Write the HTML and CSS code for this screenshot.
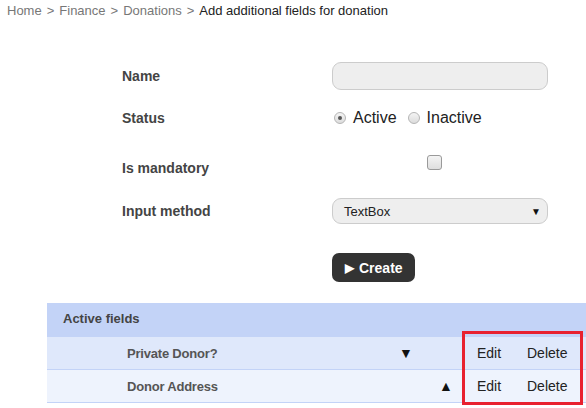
FILE: index.html
```html
<!DOCTYPE html>
<html>
<head>
<meta charset="utf-8">
<link rel="stylesheet" href="styles.css">
</head>
<body>
<div class="page">
  <nav class="breadcrumb">
    <span class="crumb">Home</span> <span class="sep">&gt;</span>
    <span class="crumb">Finance</span> <span class="sep">&gt;</span>
    <span class="crumb">Donations</span> <span class="sep">&gt;</span>
    <span class="current">Add additional fields for donation</span>
  </nav>

  <form class="form">
    <div class="row row-name">
      <label class="label">Name</label>
      <div class="control"><input class="text-input" type="text"></div>
    </div>
    <div class="row row-status">
      <label class="label">Status</label>
      <div class="control radios">
        <span class="radio checked"></span><span class="radio-text">Active</span>
        <span class="radio"></span><span class="radio-text">Inactive</span>
      </div>
    </div>
    <div class="row row-mandatory">
      <label class="label">Is mandatory</label>
      <div class="control check-cell"><span class="checkbox"></span></div>
    </div>
    <div class="row row-method">
      <label class="label">Input method</label>
      <div class="control">
        <div class="select"><span>TextBox</span><span class="caret">&#9660;</span></div>
      </div>
    </div>
    <div class="row row-create">
      <div class="label"></div>
      <div class="control"><button type="button" class="create-btn"><span class="play">&#9654;</span> Create</button></div>
    </div>
  </form>

  <div class="fields">
    <div class="fields-head">Active fields</div>
    <div class="field-row odd">
      <span class="field-name">Private Donor?</span>
      <span class="arrow arrow-down">&#9660;</span>
      <span class="action edit">Edit</span>
      <span class="action">Delete</span>
    </div>
    <div class="field-row even">
      <span class="field-name">Donor Address</span>
      <span class="arrow arrow-up">&#9650;</span>
      <span class="action edit">Edit</span>
      <span class="action">Delete</span>
    </div>
    <div class="highlight"></div>
  </div>
</div>
</body>
</html>
```

FILE: styles.css
```css
* { box-sizing: border-box; }
html, body { margin: 0; padding: 0; background: #fff; }
body { font-family: "Liberation Sans", Arial, sans-serif; color: #222; }
.page { width: 586px; height: 408px; overflow: hidden; }

.breadcrumb { padding: 3px 7px 0; font-size: 13px; line-height: 16px; color: #777; word-spacing: 1.4px; }
.breadcrumb .current { color: #222; word-spacing: 0; }

.form { margin: 43px 0 0 122px; }
.row { display: flex; align-items: center; }
.label { width: 210px; font-size: 14px; font-weight: bold; color: #444; }
.control { width: 216px; }
.row-name { height: 28px; }
.row-status { height: 28px; margin-top: 14px; }
.row-mandatory { height: 28px; margin-top: 22px; }
.row-method { height: 26px; margin-top: 16px; }
.row-create { height: 29px; margin-top: 29px; }

.text-input {
  display: block; width: 216px; height: 28px; margin: 0;
  background: #eee; border: 1px solid #ccc; border-radius: 9px; outline: none;
}

.radios { display: flex; align-items: center; font-size: 16px; color: #222; }
.radio {
  width: 12px; height: 12px; border-radius: 50%; border: 1px solid #b5b5b5;
  background: linear-gradient(#f4f4f4, #dcdcdc); margin: 0 7px 0 2px; position: relative;
}
.radio.checked::after {
  content: ""; position: absolute; left: 3px; top: 3px; width: 4px; height: 4px;
  border-radius: 50%; background: #555;
}
.radio-text { margin-right: 9px; }

.check-cell { align-self: flex-start; padding: 1px 0 0 95px; }
.checkbox {
  display: block; width: 15px; height: 15px; border: 1px solid #9a9a9a; border-radius: 3px;
  background: linear-gradient(#f4f4f4, #dedede);
}

.select {
  display: flex; justify-content: space-between; align-items: center;
  height: 26px; padding: 0 6px 0 11px; background: #eee; border: 1px solid #ccc;
  border-radius: 9px; font-size: 13px; color: #222;
}
.caret { font-size: 10px; color: #111; }

.create-btn {
  height: 29px; padding: 0 12px 0 13px; border: 0; border-radius: 7px; background: #333;
  color: #fff; font-family: "Liberation Sans", Arial, sans-serif; font-size: 14px; font-weight: bold;
  display: flex; align-items: center;
}
.play { font-size: 12px; margin-right: 5px; }

.fields { position: relative; margin: 21px 0 0 47px; }
.fields-head {
  height: 34px; display: flex; align-items: center; padding: 0 0 3px 16px;
  background: #c3d3f7; font-size: 13px; font-weight: bold; color: #444;
}
.field-row {
  height: 33px; display: flex; align-items: center; border-bottom: 1px solid #c3d3f7;
  font-size: 14px;
}
.field-row.odd { background: #dfe8fb; }
.field-row.even { background: #eef3fd; }
.field-name { width: 352px; padding-left: 80px; font-size: 13px; font-weight: bold; color: #555; letter-spacing: -0.2px; }
.arrow { font-size: 14px; color: #111; }
.arrow-down { width: 78px; }
.arrow-up { margin-left: 40px; width: 38px; }
.action { color: #222; }
.edit { width: 50px; }
.highlight {
  position: absolute; left: 415px; top: 28px; width: 121px; height: 74px;
  border: 3px solid #e8212f;
}
```
